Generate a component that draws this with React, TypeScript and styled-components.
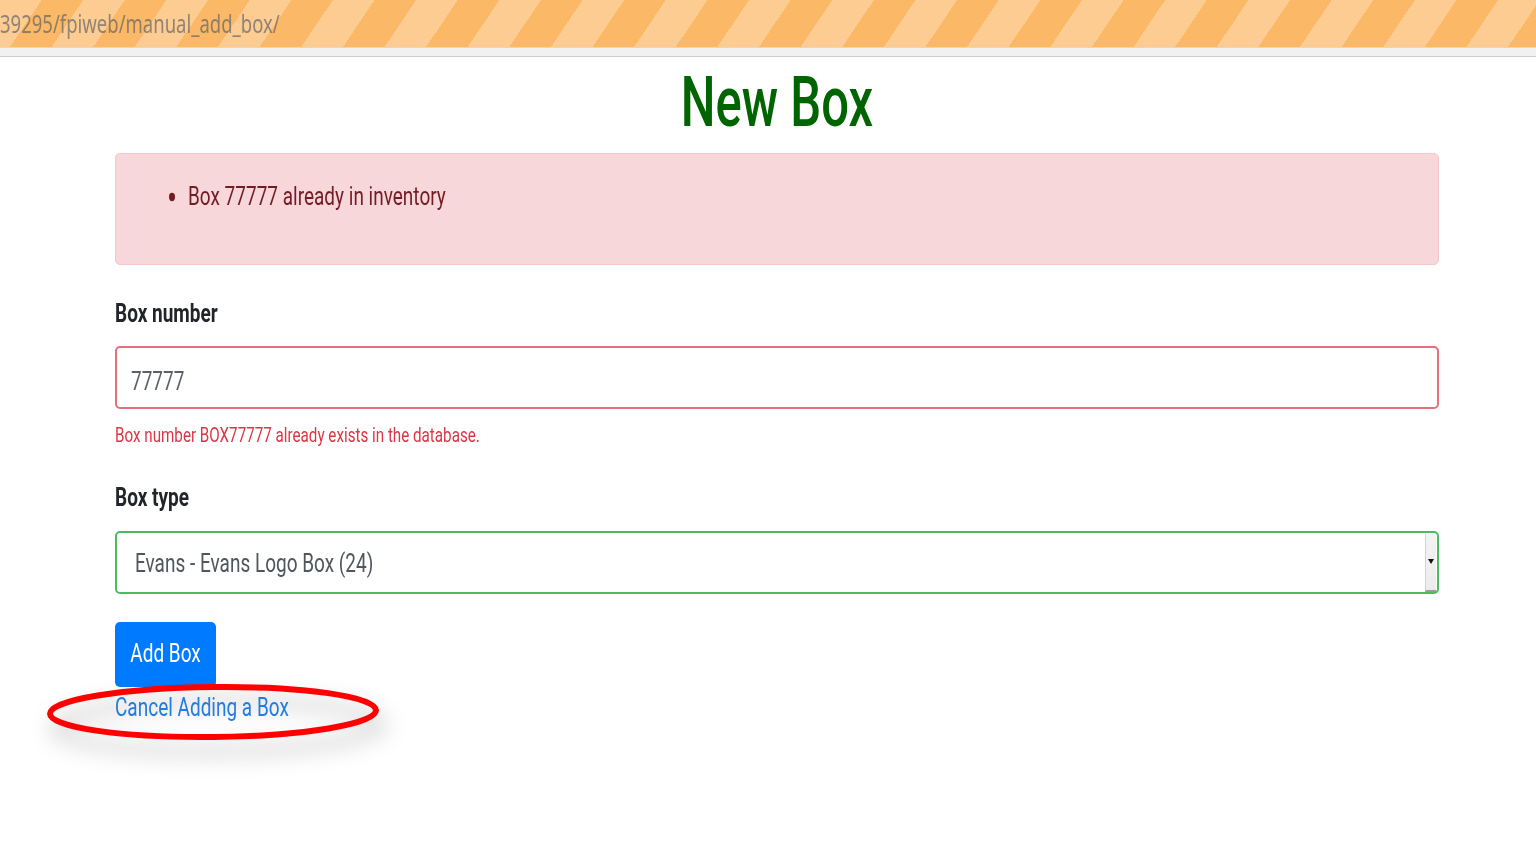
import * as React from "react";
import styled, { createGlobalStyle, css } from "styled-components";

// the shot is stretched vertically, so text is scaled on Y only
const tall = (s: number) => css`
  transform: scaleY(${s});
  transform-origin: center;
`;

const GlobalStyle = createGlobalStyle`
  html, body {
    margin: 0;
    padding: 0;
    background: #ffffff;
    font-family: Roboto, "Liberation Sans", sans-serif;
  }
  * { box-sizing: border-box; }
`;

const UrlBar = styled.div`
  height: 47px;
  display: flex;
  align-items: center;
  background: repeating-linear-gradient(
    124deg,
    #fdcc93 0px,
    #fdcc93 34.5px,
    #fbb866 34.5px,
    #fbb866 69px
  );
  overflow: hidden;
`;

const UrlText = styled.span`
  display: block;
  margin: -2px 0 0 0;
  font-family: "Noto Sans", "DejaVu Sans", sans-serif;
  font-size: 18.5px;
  line-height: 28px;
  color: rgba(100, 100, 100, 0.7);
  white-space: nowrap;
  ${tall(1.39)}
`;

const ToolStrip = styled.div`
  height: 10px;
  background: #f1f1f1;
  border-top: 1px solid #d8d8d8;
  border-bottom: 1px solid #cdcdcd;
`;

const Page = styled.main`
  padding: 0 97px 80px 115px;
`;

const Title = styled.h1`
  margin: 16px 0 0;
  height: 60px;
  line-height: 60px;
  font-size: 49px;
  font-weight: 500;
  color: #006400;
  text-align: center;
  ${tall(1.43)}
`;

const Alert = styled.div`
  margin-top: 20px;
  height: 112px;
  padding: 29px 0 0 24px;
  background: #f8d7da;
  border: 1px solid #f5c6cb;
  border-radius: 5px;
`;

const AlertList = styled.ul`
  margin: 0;
  padding-left: 48px;
  color: #721c24;
  font-size: 19px;
`;

const AlertItem = styled.li`
  line-height: 28px;
  ${tall(1.38)}
`;

const Field = styled.div<{ $gap: number }>`
  margin-top: ${(p) => p.$gap}px;
`;

const Label = styled.label`
  display: block;
  font-size: 19px;
  font-weight: 700;
  line-height: 28px;
  color: #212529;
  ${tall(1.38)}
`;

const Frame = styled.div<{ $tone: string }>`
  margin-top: 18.5px;
  height: 63px;
  display: flex;
  align-items: center;
  border: 2px solid ${(p) => p.$tone};
  border-radius: 5px;
  background: #fff;
`;

const ValueInput = styled.input`
  flex: 1;
  height: 28px;
  margin: 5px 0 0 14px;
  padding: 0;
  border: none;
  outline: none;
  background: transparent;
  font-family: Roboto, sans-serif;
  font-size: 19px;
  color: #5a6168;
  ${tall(1.4)}
`;

const SelectValue = styled.span`
  flex: 1;
  margin: 4px 0 0 18px;
  line-height: 28px;
  font-size: 19px;
  color: #4f565c;
  ${tall(1.38)}
`;

const SpinButton = styled.div`
  align-self: stretch;
  width: 11px;
  margin: 1px 1px 0 0;
  display: flex;
  align-items: center;
  justify-content: center;
  background: linear-gradient(#f3f3f3, #ececec);
  border-left: 1px solid #d4d4d4;
  border-bottom: 2px solid #9a9a9a;
  border-radius: 0 3px 0 0;

  &::after {
    content: "";
    border-left: 3px solid transparent;
    border-right: 3px solid transparent;
    border-top: 5px solid #111;
  }
`;

const Feedback = styled.div`
  margin-top: 15.5px;
  font-size: 15.2px;
  line-height: 20px;
  color: #dc3545;
  ${tall(1.38)}
`;

const Actions = styled.div`
  position: relative;
  margin-top: 28px;
`;

const PrimaryButton = styled.button`
  display: flex;
  align-items: center;
  justify-content: center;
  width: 101px;
  height: 65px;
  padding: 0;
  border: none;
  border-radius: 5px;
  background: #007bff;
  color: #ffffff;
  font-family: Roboto, sans-serif;
  font-size: 19px;
  cursor: pointer;
`;

const ButtonText = styled.span`
  display: block;
  line-height: 28px;
  margin-top: -1px;
  ${tall(1.38)}
`;

const CancelLink = styled.a`
  display: table;
  margin-top: 7px;
  font-size: 19px;
  line-height: 28px;
  color: #2584ec;
  text-decoration: none;
  ${tall(1.38)}
`;

const Annotation = styled.svg`
  position: absolute;
  left: -75px;
  top: 58px;
  overflow: visible;
  pointer-events: none;
  filter: drop-shadow(5px 14px 11px rgba(0, 0, 0, 0.3));
`;

export default function App() {
  return (
    <>
      <GlobalStyle />
      <UrlBar>
        <UrlText>39295/fpiweb/manual_add_box/</UrlText>
      </UrlBar>
      <ToolStrip />
      <Page>
        <Title>New Box</Title>
        <Alert>
          <AlertList>
            <AlertItem>Box 77777 already in inventory</AlertItem>
          </AlertList>
        </Alert>

        <Field $gap={34.5}>
          <Label htmlFor="box_number">Box number</Label>
          <Frame $tone="#e66f7b">
            <ValueInput id="box_number" defaultValue="77777" />
          </Frame>
          <Feedback>Box number BOX77777 already exists in the database.</Feedback>
        </Field>

        <Field $gap={39.5}>
          <Label>Box type</Label>
          <Frame $tone="#4dba62">
            <SelectValue>Evans - Evans Logo Box (24)</SelectValue>
            <SpinButton />
          </Frame>
        </Field>

        <Actions>
          <PrimaryButton type="button">
            <ButtonText>Add Box</ButtonText>
          </PrimaryButton>
          <CancelLink href="#">Cancel Adding a Box</CancelLink>
          <Annotation width="360" height="70" viewBox="0 0 360 70">
            <ellipse
              cx="173"
              cy="32"
              rx="163"
              ry="25"
              fill="none"
              stroke="#ff0000"
              strokeWidth="6"
              transform="rotate(-0.6 173 32)"
            />
          </Annotation>
        </Actions>
      </Page>
    </>
  );
}
